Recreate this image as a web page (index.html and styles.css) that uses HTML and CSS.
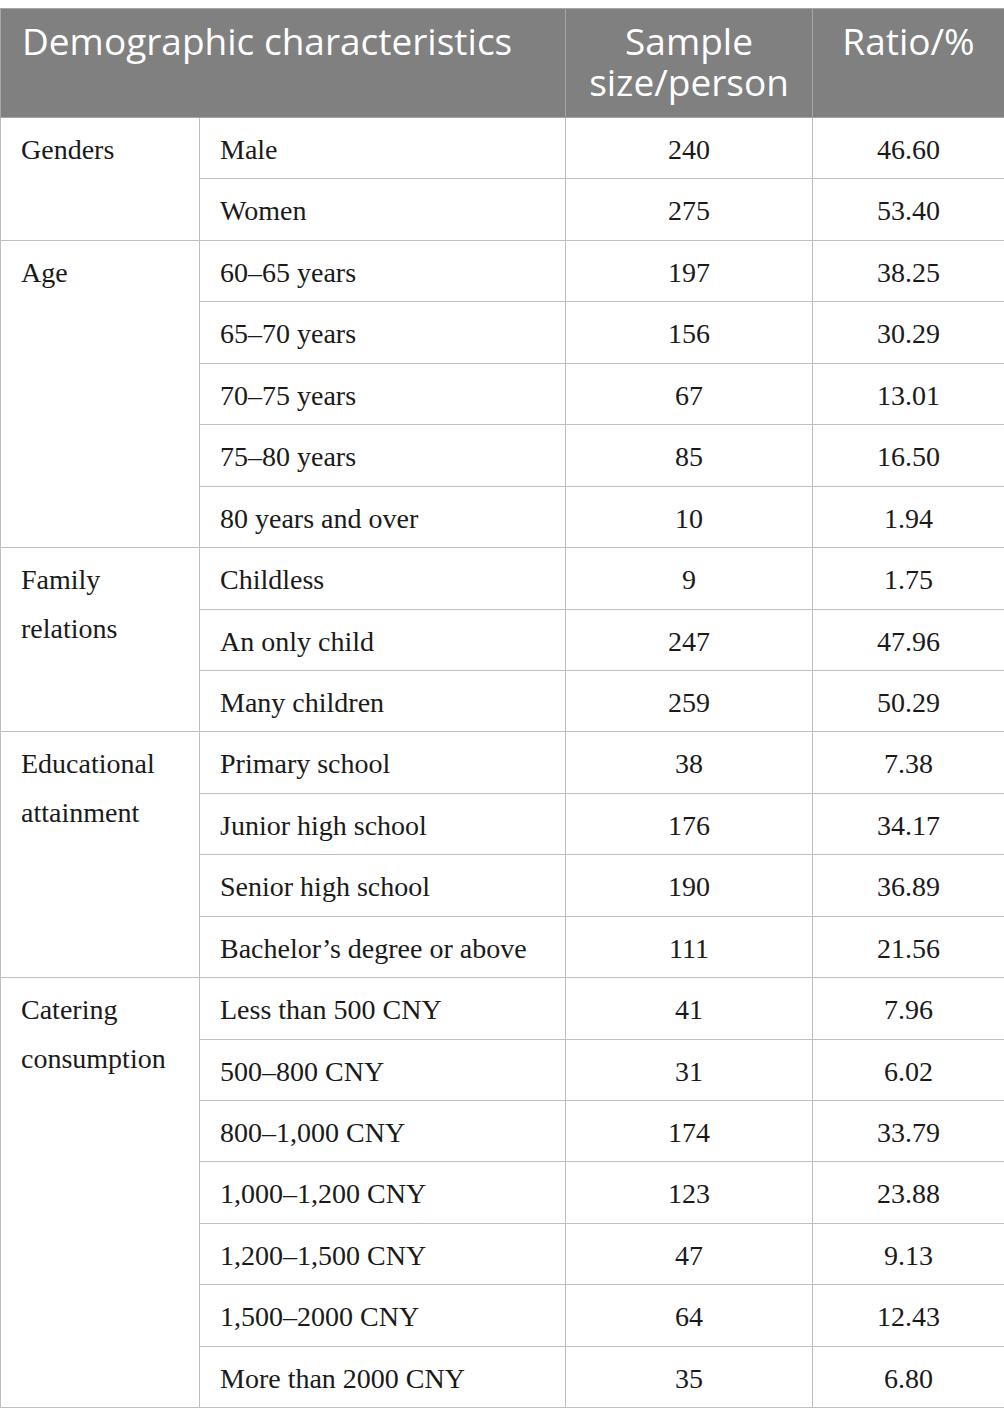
FILE: index.html
```html
<!DOCTYPE html>
<html>
<head>
<title>Demographic characteristics</title>
<link rel="stylesheet" href="styles.css">
</head>
<body>
  <table class="stats">
    <colgroup>
      <col class="col-group">
      <col class="col-item">
      <col class="col-size">
      <col class="col-ratio">
    </colgroup>
    <thead>
      <tr>
        <th colspan="2" class="head-left">Demographic characteristics</th>
        <th>Sample<br>size/person</th>
        <th>Ratio/%</th>
      </tr>
    </thead>
    <tbody>
      <tr><td rowspan="2">Genders</td><td>Male</td><td class="num">240</td><td class="num">46.60</td></tr>
      <tr><td>Women</td><td class="num">275</td><td class="num">53.40</td></tr>

      <tr><td rowspan="5">Age</td><td>60–65 years</td><td class="num">197</td><td class="num">38.25</td></tr>
      <tr><td>65–70 years</td><td class="num">156</td><td class="num">30.29</td></tr>
      <tr><td>70–75 years</td><td class="num">67</td><td class="num">13.01</td></tr>
      <tr><td>75–80 years</td><td class="num">85</td><td class="num">16.50</td></tr>
      <tr><td>80 years and over</td><td class="num">10</td><td class="num">1.94</td></tr>

      <tr><td rowspan="3">Family<br>relations</td><td>Childless</td><td class="num">9</td><td class="num">1.75</td></tr>
      <tr><td>An only child</td><td class="num">247</td><td class="num">47.96</td></tr>
      <tr><td>Many children</td><td class="num">259</td><td class="num">50.29</td></tr>

      <tr><td rowspan="4">Educational<br>attainment</td><td>Primary school</td><td class="num">38</td><td class="num">7.38</td></tr>
      <tr><td>Junior high school</td><td class="num">176</td><td class="num">34.17</td></tr>
      <tr><td>Senior high school</td><td class="num">190</td><td class="num">36.89</td></tr>
      <tr><td>Bachelor’s degree or above</td><td class="num">111</td><td class="num">21.56</td></tr>

      <tr><td rowspan="7">Catering<br>consumption</td><td>Less than 500 CNY</td><td class="num">41</td><td class="num">7.96</td></tr>
      <tr><td>500–800 CNY</td><td class="num">31</td><td class="num">6.02</td></tr>
      <tr><td>800–1,000 CNY</td><td class="num">174</td><td class="num">33.79</td></tr>
      <tr><td>1,000–1,200 CNY</td><td class="num">123</td><td class="num">23.88</td></tr>
      <tr><td>1,200–1,500 CNY</td><td class="num">47</td><td class="num">9.13</td></tr>
      <tr><td>1,500–2000 CNY</td><td class="num">64</td><td class="num">12.43</td></tr>
      <tr><td>More than 2000 CNY</td><td class="num">35</td><td class="num">6.80</td></tr>
    </tbody>
  </table>
</body>
</html>
```

FILE: styles.css
```css
body {
  margin: 8px 0 0 0;
  padding: 0;
  background-color: white;
  color: #1a1a1a;
}
.stats {
  width: 1004px;
  border-collapse: collapse;
  table-layout: fixed;
  font-family: "Liberation Serif", serif;
  font-size: 28px;
}
.col-group { width: 199px; }
.col-item { width: 366px; }
.col-size { width: 247px; }
.col-ratio { width: 192px; }
.stats th {
  background-color: #808080;
  color: white;
  font-family: "Open Sans", sans-serif;
  font-weight: normal;
  font-size: 37px;
  line-height: 41px;
  text-align: center;
  vertical-align: top;
  padding: 11px 6px 15px;
  border: 1px solid #a6a6a6;
}
.stats th.head-left {
  text-align: left;
  padding-left: 21px;
}
.stats td {
  border: 1px solid #bdbdbd;
  padding: 8px 20px 4px;
  line-height: 48.43px;
  vertical-align: top;
}
.stats td.num {
  text-align: center;
}
```
